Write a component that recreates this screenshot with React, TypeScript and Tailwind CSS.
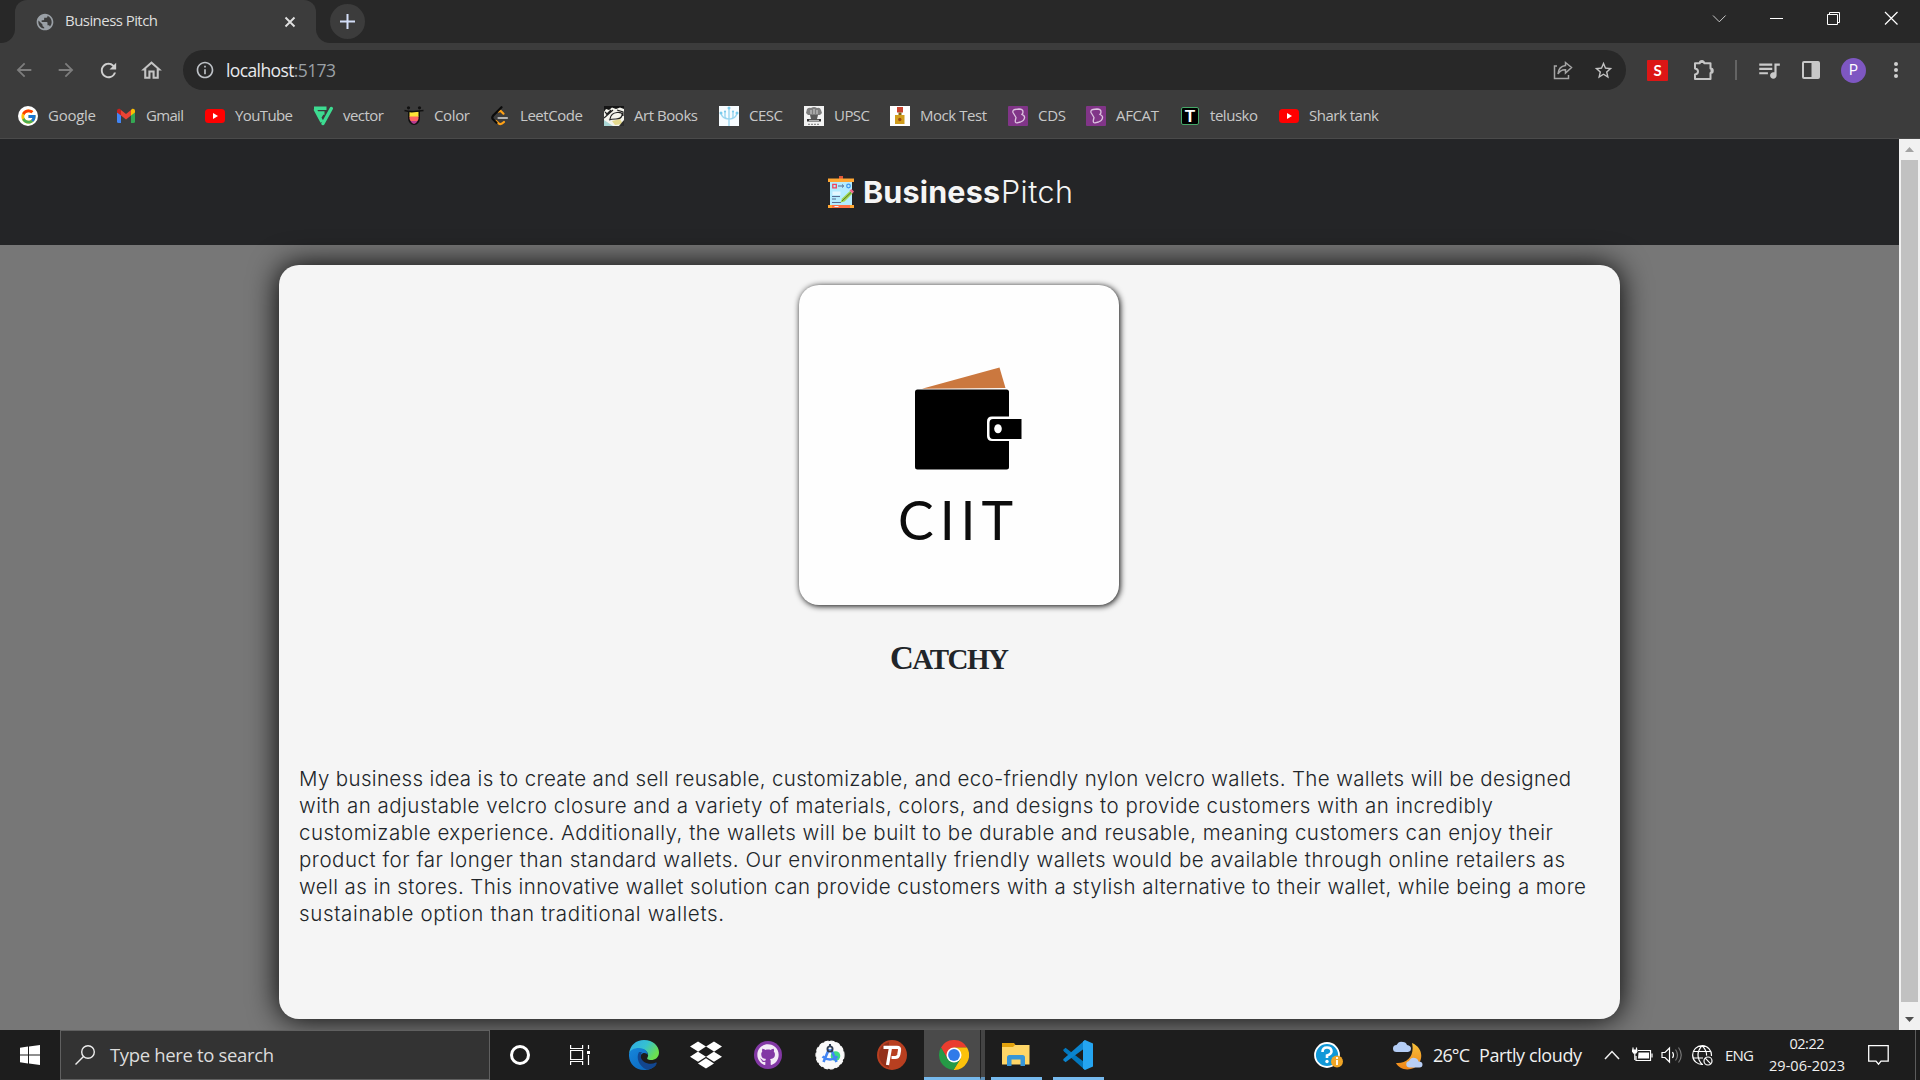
import React, { useLayoutEffect, useRef, useState } from "react";
import { FcGoogle } from "react-icons/fc";
import { FaDropbox, FaGithub } from "react-icons/fa";
import {
  MdArrowBack,
  MdArrowForward,
  MdRefresh,
  MdOutlineHome,
  MdInfoOutline,
  MdStarBorder,
  MdQueueMusic,
  MdPublic,
} from "react-icons/md";

/* Tracks a single line of text so that it spans the given width. */
function Fit({ width, className = "", children }: { width: number; className?: string; children: React.ReactNode }) {
  const ref = useRef<HTMLSpanElement>(null);
  const [spacing, setSpacing] = useState(0);
  useLayoutEffect(() => {
    const el = ref.current;
    if (!el) return;
    const n = (el.textContent || "").length;
    if (n > 1) setSpacing((width - el.getBoundingClientRect().width) / (n - 1));
  }, [width]);
  return (
    <span className={"block shrink-0 whitespace-nowrap " + className} style={{ width }}>
      <span ref={ref} className="inline-block" style={{ letterSpacing: spacing }}>
        {children}
      </span>
    </span>
  );
}

const YouTube = () => (
  <svg width="20" height="20" viewBox="0 0 20 20">
    <rect y="3" width="20" height="14" rx="3.5" fill="#f00" />
    <path d="M8 7v6l5-3z" fill="#fff" />
  </svg>
);

const Google = () => (
  <span className="flex size-5 items-center justify-center rounded-full bg-white">
    <FcGoogle size={17} />
  </span>
);

const Gmail = () => (
  <svg width="20" height="20" viewBox="0 0 20 20">
    <path d="M1 6v9.500q0 1.500 1.500 1.500H5V8.500z" fill="#4285f4" />
    <path d="M19 6v9.500q0 1.500-1.500 1.500H15V8.500z" fill="#34a853" />
    <path d="M1 6.500V5c0-2 2-2.700 3.300-1.700L5 4v5.500z" fill="#c5221f" />
    <path d="M19 6.500V5c0-2-2-2.700-3.300-1.700L15 4v5.500z" fill="#fbbc04" />
    <path d="M5 4l5 4 5-4v5.500l-5 4-5-4z" fill="#ea4335" />
  </svg>
);

const Vector = () => (
  <svg width="20" height="20" viewBox="0 0 20 20" fill="none" stroke="#3ddc91">
    <path d="M1 2.200h12.500M2 3l7 13M5 7h6.500M7 11l3-5" strokeWidth="3.400" />
    <path d="M18.300 2.500L10 17.500" strokeWidth="3.400" strokeLinecap="round" />
  </svg>
);

const ColorHunt = () => (
  <svg width="20" height="20" viewBox="0 0 20 20">
    <path d="M4 5h12v7a6 7 0 0 1-12 0z" fill="#111" />
    <path d="M5.500 5.500h9V11h-9z" fill="#ffe437" />
    <path d="M5.500 10.500h9V13l-1 2h-7l-1-2z" fill="#ff6464" />
    <path d="M6.500 15h7q-1.500 3-3.500 3t-3.500-3z" fill="#b83b8e" />
    <path d="M.5 4.500Q5 6 10 5.500t9.500-1" stroke="#111" strokeWidth="1.600" fill="none" />
    <circle cx="4.500" cy="1.800" r="1.600" fill="#111" />
    <circle cx="15.500" cy="1.800" r="1.600" fill="#111" />
  </svg>
);

const LeetCode = () => (
  <svg width="20" height="20" viewBox="0 0 20 20" fill="none" strokeLinecap="round" strokeWidth="2.200">
    <path d="M8.500 5.500l2-.8 3 3M6 15l3.500 3q2 .6 4.500-2" stroke="#ffa116" />
    <path d="M11.500 1.200L3 9.800q-1.500 2 0 3.500l3.500 3.500" stroke="#0b0b0b" />
    <path d="M8.500 12H17" stroke="#b3b3b3" />
  </svg>
);

const ArtBooks = () => (
  <svg width="20" height="20" viewBox="0 0 20 20">
    <path d="M0 0h20v20H0z" fill="#f5f5ee" />
    <path d="M0 0h20v3l-4-1.500L12 3 8 1.500 5 4 2 3 0 6z" fill="#151515" />
    <path d="M2 9l5-5M0 12l9-8M1 6l3 3M6 13Q7 7 13 6.500t5 3-6 3.500-7 1M13 4l6 2v4" stroke="#222" strokeWidth="1.200" fill="none" />
    <path d="M8 15l8-2 3 5-8 1z" fill="#e6da8e" />
    <path d="M0 14l9 6H0z" fill="#a9d6d5" />
    <path d="M15 20l5-6v6z" fill="#2c2c2c" />
  </svg>
);

const Cesc = () => (
  <svg width="20" height="20" viewBox="0 0 20 20" fill="none">
    <path d="M0 0h20v20H0z" fill="#f7fcff" />
    <path d="M10 2v18M2 7q1 6 8 6t8-6M6 6v5q1 2 4 2 4 0 4-2V6" stroke="#9ad6f0" strokeWidth="1.400" />
    <g fill="#7acbec">
      <circle cx="10" cy="2" r="1.500" />
      <circle cx="2" cy="7" r="1.500" />
      <circle cx="18" cy="7" r="1.500" />
      <circle cx="6" cy="5.500" r="1.100" />
      <circle cx="14" cy="5.500" r="1.100" />
    </g>
  </svg>
);

const Upsc = () => (
  <svg width="20" height="20" viewBox="0 0 20 20">
    <path d="M0 0h20v20H0z" fill="#f3f3f3" />
    <path d="M3 3q2-2 4-1 3-2 6 0 3-1 4 2l1 3-2 2H4L2 7z" fill="#7e7e7e" />
    <path d="M6 9h8l-1 4H7z" fill="#5a5a5a" />
    <path d="M3 13h14v2.500H3z" fill="#333" />
    <path d="M7 4v4M10 3v5M13 4v4M5 14.300h10" stroke="#d0d0d0" />
    <path d="M4 18.300h12" stroke="#777" strokeDasharray="2 1" />
  </svg>
);

const MockTest = () => (
  <svg width="20" height="20" viewBox="0 0 20 20">
    <path d="M0 0h20v20H0z" fill="#fff" />
    <path d="M7 1h6v5.500H7z" fill="#c8442f" />
    <path d="M8.500 6.500h3V9h-3z" fill="#7d6412" />
    <path d="M5 9h9.500v9H5z" fill="#d19d1d" />
    <circle cx="9.800" cy="13.500" r="1.700" fill="#9c4a12" />
  </svg>
);

const Byju = () => (
  <svg width="20" height="20" viewBox="0 0 20 20">
    <rect width="20" height="20" rx="1" fill="#813588" />
    <path
      d="M5 6.500Q4.300 4 7 3.500l4-.5q4 0 4 3 0 1.500-1.200 2.500Q17 9.500 16.500 12q-.5 3-4 4l-3.500.8Q7 17 7.300 14.500L8 11.500z"
      fill="none"
      stroke="#dcc3df"
      strokeWidth="1.300"
      strokeLinejoin="round"
    />
  </svg>
);

const Telusko = () => (
  <span className="flex h-[18px] w-[18px] items-center justify-center rounded-[2px] border border-[#46a868] bg-black font-['Liberation_Sans'] text-[17px] leading-none font-bold text-white">
    T
  </span>
);

const bookmarks = [
  { icon: <Google />, name: "Google", w: 48, slot: "w-[98px]" },
  { icon: <Gmail />, name: "Gmail", w: 38, slot: "w-[89px]" },
  { icon: <YouTube />, name: "YouTube", w: 58, slot: "w-[108px]" },
  { icon: <Vector />, name: "vector", w: 41, slot: "w-[91px]" },
  { icon: <ColorHunt />, name: "Color", w: 36, slot: "w-[86px]" },
  { icon: <LeetCode />, name: "LeetCode", w: 63, slot: "w-[114px]" },
  { icon: <ArtBooks />, name: "Art Books", w: 64, slot: "w-[115px]" },
  { icon: <Cesc />, name: "CESC", w: 34, slot: "w-[85px]" },
  { icon: <Upsc />, name: "UPSC", w: 36, slot: "w-[86px]" },
  { icon: <MockTest />, name: "Mock Test", w: 67, slot: "w-[118px]" },
  { icon: <Byju />, name: "CDS", w: 28, slot: "w-[78px]" },
  { icon: <Byju />, name: "AFCAT", w: 43, slot: "w-[94px]" },
  { icon: <Telusko />, name: "telusko", w: 48, slot: "w-[99px]" },
  { icon: <YouTube />, name: "Shark tank", w: 70, slot: "w-[110px]" },
];

function TabStrip() {
  return (
    <div className="flex h-[43px] bg-[#282828]">
      <div className="h-full w-[15px] bg-[#3c3c3c]">
        <div className="h-full w-full rounded-br-[14px] bg-[#282828]" />
      </div>
      <div className="flex h-full w-[301px] items-center rounded-t-[12px] bg-[#3c3c3c] pl-5">
        <MdPublic size={20} color="#9aa0a6" />
        <Fit width={93} className="ml-[10px] pb-[3px] text-[15px] text-[#dedede]">Business Pitch</Fit>
        <svg className="ml-[126px]" width="12" height="12" viewBox="0 0 12 12">
          <path d="M1.500 1.500l9 9M10.500 1.500l-9 9" stroke="#e0e0e0" strokeWidth="1.900" />
        </svg>
      </div>
      <div className="h-full w-[14px] bg-[#3c3c3c]">
        <div className="h-full w-full rounded-bl-[14px] bg-[#282828]" />
      </div>
      <div className="mt-[4px] flex size-[35px] items-center justify-center rounded-full bg-[#3c3c3c]">
        <svg width="15" height="15" viewBox="0 0 15 15">
          <path d="M7.500 0v15M0 7.500h15" stroke="#d3def8" strokeWidth="2" />
        </svg>
      </div>
      <svg className="mt-[11px] ml-auto" width="186" height="15" viewBox="0 0 186 15" fill="none" stroke="#fff" strokeWidth="1">
        <path d="M1 4.500l6.300 6.300 6.300-6.300" stroke="#ccc" />
        <path d="M58 7.500h13" />
        <path d="M115.500 3.500h10v10h-10zM117.500 3.500v-2h10v10h-2" />
        <path d="M173 1l12.500 12.500M185.500 1L173 13.500" strokeWidth="1.200" />
      </svg>
      <div className="w-[22px]" />
    </div>
  );
}

function Toolbar() {
  return (
    <div className="flex h-[54px] items-center">
      <MdArrowBack className="ml-[13px]" size={22} color="#7d7d7d" />
      <MdArrowForward className="ml-[20px]" size={22} color="#7d7d7d" />
      <MdRefresh className="ml-[20px]" size={23} color="#cfcfcf" />
      <MdOutlineHome className="ml-[19px]" size={25} color="#c4c4c4" />
      <div className="ml-[19px] flex h-10 w-[1443px] items-center rounded-full bg-[#282828]">
        <MdInfoOutline className="ml-[12px]" size={20} color="#bdc1c6" />
        <Fit width={110} className="ml-[11px] text-[17.500px] text-[#9aa0a6]">
          <span className="text-[#e8eaed]">localhost</span>:5173
        </Fit>
        <svg className="mr-[20px] ml-auto" width="20" height="20" viewBox="0 0 20 20" fill="none" stroke="#a5a5a5" strokeWidth="1.500">
          <path d="M4 6H1.500v12.500h14V15" />
          <path d="M12.500 2.500l6 5-6 5.500V9.800Q7.500 9.500 5 14q.5-7.500 7.500-8.500z" />
        </svg>
        <MdStarBorder className="mr-[12px]" size={21} color="#c2c2c2" />
      </div>
      <div className="ml-[21px] flex size-[21px] items-center justify-center rounded-[1px] bg-[#dc1616] font-[Lato] text-[15px] leading-none font-bold text-white">
        S
      </div>
      <svg className="ml-[25px]" width="22" height="22" viewBox="0 0 22 22">
        <path
          d="M2 4.200h4.800a2.200 2.200 0 0 1 4.400 0H17.500V9.500a2.200 2.200 0 0 1 0 4.500V20H2v-4.500c4-.5 4-5.500 0-6z"
          fill="none"
          stroke="#c6c6c6"
          strokeWidth="2"
          strokeLinejoin="round"
        />
        <path d="M7 4a2.200 2.200 0 0 1 4.400 0zM17.500 9.500a2.200 2.200 0 0 1 0 4.500z" fill="#c6c6c6" />
      </svg>
      <div className="ml-5 h-5 w-[2px] bg-[#646464]" />
      <MdQueueMusic className="ml-[19px]" size={26} color="#cacaca" />
      <svg className="ml-[20px]" width="18" height="18" viewBox="0 0 18 18">
        <rect x="1" y="1" width="16" height="16" rx="1" fill="none" stroke="#c8c8c8" strokeWidth="2" />
        <path d="M9.500 1H17v16H9.500z" fill="#c8c8c8" />
      </svg>
      <div className="ml-[21px] flex size-[25px] items-center justify-center rounded-full bg-[#7e57c2] font-[Roboto] text-[14px] leading-none text-white">
        P
      </div>
      <svg className="ml-[28px]" width="4" height="16" viewBox="0 0 4 16" fill="#d0d0d0">
        <circle cx="2" cy="2" r="2" />
        <circle cx="2" cy="8" r="2" />
        <circle cx="2" cy="14" r="2" />
      </svg>
    </div>
  );
}

function PitchBoard() {
  return (
    <svg width="26" height="32" viewBox="0 0 26 32">
      <path d="M11 0h4v3h-4z" fill="#e0563a" />
      <path d="M2 6h22v23H2z" fill="#b4ecff" />
      <path d="M0 2.500h26V6H0z" fill="#ffa733" />
      <path d="M0 29h26v3H0z" fill="#ff7044" />
      <path d="M0 29h4v3H0zM22 29h4v3h-4z" fill="#ffa733" />
      <path d="M6.500 30h4v1h-4z" fill="#e3f6ff" />
      <path d="M4.800 8.300h3.500v3.500H4.800z" fill="none" stroke="#f0455f" strokeWidth="1.300" />
      <path d="M10 10h5M14 8.500l1.800 1.500-1.800 1.500" fill="none" stroke="#51698f" strokeWidth="1" />
      <circle cx="20.500" cy="10" r="1.800" fill="none" stroke="#3c95ee" strokeWidth="1.200" />
      <path d="M4.500 15.500h8v3.500h-8z" fill="#e4f7ff" />
      <path d="M4 20.500h8M4 23h4M4 26.500h9" stroke="#576d92" strokeWidth="1.100" />
      <path d="M12.500 26.500l1.500-4 8-7.500 2.500 2.500-8 8z" fill="#9ed64b" />
      <path d="M14 25l9-8.500" stroke="#59702c" strokeWidth="1" />
      <path d="M21.500 14.500l2-1.500 2.500 2.500-1.500 2z" fill="#f0678c" />
    </svg>
  );
}

const pitch = [
  { w: 1272, t: "My business idea is to create and sell reusable, customizable, and eco-friendly nylon velcro wallets. The wallets will be designed" },
  { w: 1194, t: "with an adjustable velcro closure and a variety of materials, colors, and designs to provide customers with an incredibly" },
  { w: 1254, t: "customizable experience. Additionally, the wallets will be built to be durable and reusable, meaning customers can enjoy their" },
  { w: 1266, t: "product for far longer than standard wallets. Our environmentally friendly wallets would be available through online retailers as" },
  { w: 1287, t: "well as in stores. This innovative wallet solution can provide customers with a stylish alternative to their wallet, while being a more" },
  { w: 425, t: "sustainable option than traditional wallets." },
];

function Page() {
  return (
    <div className="flex h-[891px]">
      <div className="flex w-[1899px] flex-col overflow-hidden bg-[#777]">
        <header className="flex h-[106px] shrink-0 items-center bg-[#242527] pl-[828px] font-[Inter] text-[30.500px] leading-[40px] text-[#f5f5f5]">
          <PitchBoard />
          <Fit width={137} className="ml-[9px] font-bold">Business</Fit>
          <Fit width={72} className="ml-px font-light">Pitch</Fit>
        </header>
        <main className="mt-5 ml-[279px] flex h-[754px] w-[1341px] shrink-0 flex-col rounded-[20px] bg-[#f5f5f5] p-5 text-[#212529] shadow-[0_0_30px_#000]">
          <div className="ml-[500px] flex size-80 flex-col rounded-[20px] bg-[#fefefe] shadow-[1px_1px_6px_#000]">
            <svg className="mt-[81px] ml-[115px] shrink-0" width="108" height="104" viewBox="0 0 108 104">
              <path d="M8 22.800L85.500 1.500l6 20.500z" fill="#cb783f" />
              <rect x="1" y="23.500" width="94" height="80" rx="2.500" fill="#000" />
              <path d="M95.500 50.500H78q-5 0-5 5v14.500q0 5 5 5h17.500" fill="#fff" />
              <path d="M107.500 53H79q-3.500 0-3.500 4v12q0 4 3.500 4h28.500z" fill="#000" />
              <ellipse cx="84" cy="62.800" rx="3.800" ry="4.500" fill="#fff" />
            </svg>
            <Fit width={115} className="mt-[17px] ml-[99px] font-[Lato] text-[53.500px] leading-[64px] text-[#0c0c0c]">CIIT</Fit>
          </div>
          <h2 className="mt-[33px] ml-[591px] font-['Liberation_Serif'] text-[33px] leading-[40px] font-bold">
            <Fit width={119}>
              C<span className="text-[29px] uppercase">atchy</span>
            </Fit>
          </h2>
          <div className="mt-[86px] font-[Inter] text-[20.500px] leading-[27px] font-light">
            {pitch.map((l) => (
              <Fit key={l.w} width={l.w}>{l.t}</Fit>
            ))}
          </div>
        </main>
      </div>
      <div className="flex w-[21px] flex-col items-center bg-[#f1f1f1]">
        <svg className="my-[8px] shrink-0" width="9" height="5" viewBox="0 0 9 5"><path d="M0 5L4.500 0 9 5z" fill="#a3a3a3" /></svg>
        <div className="h-[842px] w-[17px] bg-[#c1c1c1]" />
        <svg className="mt-[15px] shrink-0" width="9" height="5" viewBox="0 0 9 5"><path d="M0 0h9L4.500 5z" fill="#505050" /></svg>
      </div>
    </div>
  );
}

const Edge = () => (
  <svg width="30" height="30" viewBox="0 0 30 30">
    <defs>
      <linearGradient id="edgeTop" x1="0" y1="0" x2="1" y2=".5">
        <stop offset="0" stopColor="#2fa8e8" />
        <stop offset=".55" stopColor="#35c1d1" />
        <stop offset="1" stopColor="#6ce04f" />
      </linearGradient>
      <linearGradient id="edgeLow" x1="0" y1="0" x2="1" y2="1">
        <stop offset="0" stopColor="#1687dc" />
        <stop offset="1" stopColor="#0a62b8" />
      </linearGradient>
    </defs>
    <path d="M0 14C1 5 7 0 15 0c9 0 15 6 15 12.500 0 5-4 7.500-8 7.500-3 0-4.500-1-3.500-2.500 2-3-.5-8.500-7-8.500C6 9 1 11 0 14z" fill="url(#edgeTop)" />
    <path d="M0 14c1-4 5-6 10-6 6 0 9 4 8.800 7-1-2-5-3-6.800 0-2.500 5 1 10 7 11 3 .5 6 0 8.500-2C25 28 20 30 15 30 6 30-.5 23 0 14z" fill="url(#edgeLow)" />
    <path d="M10 12c-3 5-1 14 8 17.800 4-.6 8-3 9.800-6.600.2-.7-.4-1-1-.6-6 3-14 0-15-5.600-.2-2 .3-3.600 1.200-5z" fill="#12468f" />
  </svg>
);

const AndroidStudio = () => (
  <svg width="30" height="30" viewBox="0 0 30 30" fill="none">
    <circle cx="15" cy="15" r="14" fill="#fafafa" stroke="#fafafa" strokeWidth="1.200" strokeDasharray="4 2" />
    <circle cx="20.500" cy="16" r="4.800" fill="#3ddc84" />
    <path d="M14 9L8.500 22M16 9l5.500 13M7.500 16.500q7.500 6 15 0" stroke="#4285f4" strokeWidth="2.600" />
    <circle cx="15" cy="9" r="2.600" stroke="#2f3c52" strokeWidth="1.800" />
    <path d="M15 4v3" stroke="#2f3c52" strokeWidth="2" />
  </svg>
);

const Psiphon = () => (
  <svg width="30" height="30" viewBox="0 0 30 30">
    <circle cx="15" cy="15" r="15" fill="#b83f20" />
    <path d="M2 15A13 13 0 0 1 12 2V28A13 13 0 0 1 2 15z" fill="#93301a" />
    <path d="M6.500 7.300h13.500q3 0 2.500 3.200l-.7 4q-.6 3-3.600 3h-3.700M13.500 7.500L10.500 25" fill="none" stroke="#fff" strokeWidth="3.200" />
  </svg>
);

const Chrome = () => (
  <svg width="30" height="30" viewBox="0 0 30 30">
    <path d="M2 7.500A15 15 0 0 1 28 7.500H15L8.500 18.700z" fill="#ea3d2f" />
    <path d="M28 7.500A15 15 0 0 1 14.500 30l7-11.300L15 7.500z" fill="#fcc20b" />
    <path d="M2 7.500A15 15 0 0 0 14.500 30l7-11.300H8.500z" fill="#259a46" />
    <circle cx="15" cy="15" r="7.500" fill="#fff" />
    <circle cx="15" cy="15" r="5.900" fill="#2f7be9" />
  </svg>
);

const Explorer = () => (
  <svg width="28" height="24" viewBox="0 0 28 24">
    <path d="M0 1h12l1.500 2H27v5H0z" fill="#e3a20c" />
    <path d="M0 5h11l2-2h14.500v19.500H0z" fill="#ffd667" />
    <path d="M5 24V15.500Q5 13 7.500 13h13q2.500 0 2.500 2.500V24h-4.500v-6.500h-9V24z" fill="#3796d8" />
  </svg>
);

const VsCode = () => (
  <svg width="30" height="30" viewBox="0 0 30 30">
    <path d="M0 10l2.500-2.300 19.500 15V30L1 11.500z" fill="#0277bd" />
    <path d="M0 20l2.500 2.300L22 8V0L1 18.500z" fill="#0a84cf" />
    <path d="M22 0l8 3.500v23L22 30l-2-1.500v-27z" fill="#25a5f1" />
  </svg>
);

function Taskbar() {
  return (
    <div className="flex h-[50px] items-center bg-[#1d1d1d] text-[#f0f0f0]">
      <div className="flex w-[60px] justify-center">
        <svg width="20" height="20" viewBox="0 0 20 20" fill="#fff">
          <path d="M0 2.800L8 1.600V9.500H0zM9 1.500L20 0v9.500H9zM0 10.500h8v7.900l-8-1.200zM9 10.500h11V20L9 18.500z" />
        </svg>
      </div>
      <div className="flex h-[50px] w-[430px] items-center border border-[#606060] bg-[#333]">
        <svg className="ml-[14px]" width="20" height="20" viewBox="0 0 20 20" fill="none" stroke="#eee" strokeWidth="1.400">
          <circle cx="13" cy="7" r="6.300" />
          <path d="M8.500 11.500L.5 19.500" />
        </svg>
        <Fit width={164} className="ml-[15px] text-[18.500px] text-[#dcdcdc]">Type here to search</Fit>
      </div>
      <div className="ml-[20px] size-5 rounded-full border-[3px] border-white" />
      <svg className="ml-[40px]" width="20" height="20" viewBox="0 0 20 20" fill="none" stroke="#fff" strokeWidth="1.200">
        <path d="M.6 0v3.500h12V0M.6 5.500h12v9H.6zM.6 20v-3.500h12V20M18.500 0v4M18.500 10v10" />
        <path d="M17 6h3v3h-3z" fill="#fff" stroke="none" />
      </svg>
      <div className="ml-[39px]"><Edge /></div>
      <FaDropbox className="ml-[31px]" size={32} color="#fff" />
      <div className="ml-[32px] flex size-[28px] items-center justify-center rounded-full bg-[#8338a5]">
        <FaGithub size={22} color="#f4eaf7" />
      </div>
      <div className="ml-[33px]"><AndroidStudio /></div>
      <div className="ml-[32px]"><Psiphon /></div>
      <div className="ml-[17px] flex h-full w-[56px] flex-col items-center justify-between border-b-[3px] border-[#76b9ed] bg-[#4a4a4a] pt-[10px] pl-[3px]">
        <Chrome />
      </div>
      <div className="h-full w-[5px] border-b-[3px] border-l border-b-[#5f93bd] border-l-[#222] bg-[#444]" />
      <div className="ml-[6px] flex h-full w-[51px] flex-col items-center border-b-[3px] border-[#76b9ed] pt-[12px] pr-[2px]">
        <Explorer />
      </div>
      <div className="ml-[11px] flex h-full w-[51px] flex-col items-center border-b-[3px] border-[#76b9ed] pt-[10px] pr-[2px]">
        <VsCode />
      </div>
      <svg className="ml-[210px]" width="29" height="28" viewBox="0 0 29 28">
        <circle cx="13" cy="14" r="12" fill="#1098d8" stroke="#fff" strokeWidth="1.800" />
        <path d="M8.500 11q0-4.500 4.500-4.500t4.500 4Q17.500 13 13 14.500V17" fill="none" stroke="#fff" strokeWidth="2.600" />
        <circle cx="13" cy="20.500" r="1.700" fill="#fff" />
        <circle cx="23" cy="20.500" r="6" fill="#f0a526" />
        <path d="M23 19v5M23 16v2" stroke="#fff" strokeWidth="1.800" />
      </svg>
      <svg className="ml-[50px]" width="30" height="29" viewBox="0 0 30 29">
        <defs>
          <linearGradient id="moon" x1="0" y1="0" x2="0" y2="1">
            <stop offset="0" stopColor="#f7c13a" />
            <stop offset="1" stopColor="#f08519" />
          </linearGradient>
        </defs>
        <path d="M19 2c12 5 12 19 2 25-7 3-15 1-18-5 11 1 19-7 16-20z" fill="url(#moon)" />
        <path d="M3.500 11a3.500 3.500 0 0 1 0-7Q6-.5 10 1q3 0 4 3 4 .5 4 3.500T15 11z" fill="#b4cdf5" />
        <path d="M16 26.500a3.300 3.300 0 0 1 0-6.500q2-4 6-3 3 .5 3.500 3.500 4 0 4 3t-3 3z" fill="#b9cff6" />
      </svg>
      <Fit width={37} className="ml-[10px] text-[18px]">26°C</Fit>
      <Fit width={103} className="ml-[9px] text-[18px]">Partly cloudy</Fit>
      <svg className="ml-[22px]" width="16" height="10" viewBox="0 0 16 10"><path d="M1 9l7-7.500L15 9" fill="none" stroke="#f0f0f0" strokeWidth="1.500" /></svg>
      <svg className="ml-[12px]" width="21" height="16" viewBox="0 0 21 16" fill="none" stroke="#fff">
        <path d="M6 3.500h12.500v10H4V9" strokeWidth="1.200" />
        <path d="M6.500 5.500h10.500v6H6z" fill="#fff" stroke="none" />
        <path d="M20 6.500v4M1 .5v2.500M4.500.5v2.500M2.800 7v6" strokeWidth="1.200" />
        <path d="M0 2.500h5.500v2q-1 2.500-2.700 2.500T0 4.500z" fill="#fff" stroke="none" />
      </svg>
      <svg className="ml-[8px]" width="22" height="18" viewBox="0 0 22 18" fill="none" stroke="#fff" strokeWidth="1.200">
        <path d="M1 6.500h3L8.500 2v14L4 11.500H1zM11.500 6q2 3 0 6" />
        <path d="M14.500 3.500q4 5.500 0 11M17.500 1.500q5.500 7.500 0 15" stroke="#777" />
      </svg>
      <svg className="ml-[9px]" width="21" height="21" viewBox="0 0 21 21" fill="none" stroke="#fff" strokeWidth="1.200">
        <path d="M11 19.400A9.400 9.400 0 1 1 19.400 11M10 19.400Q2 10 10 .6q5 5 4.500 10M1.500 6.500h17M1.500 13H11" />
        <circle cx="16" cy="16" r="4" />
        <path d="M13.200 13.200l5.600 5.600" />
      </svg>
      <Fit width={29} className="ml-[12px] text-[15px]">ENG</Fit>
      <div className="ml-[15px] flex w-[76px] flex-col items-center text-[14.500px] leading-[22px]">
        <Fit width={35}>02:22</Fit>
        <Fit width={76}>29-06-2023</Fit>
      </div>
      <svg className="ml-[23px]" width="21" height="21" viewBox="0 0 21 21" fill="none" stroke="#fff" strokeWidth="1.300">
        <path d="M.7.700h19.500v15.500H13l-2.500 3-2.500-3H.7z" />
      </svg>
      <div className="ml-auto h-full w-[5px] border-l border-[#5c5c5c]" />
    </div>
  );
}

export default function App() {
  return (
    <div className="h-[1080px] w-[1920px] overflow-hidden bg-[#3c3c3c] font-['Open_Sans',sans-serif]">
      <TabStrip />
      <Toolbar />
      <div className="flex h-[42px] items-center border-b border-[#4a4a4a] pb-[3px] pl-[18px] text-[15px] text-[#c8c8c8]">
        {bookmarks.map((b) => (
          <div key={b.name} className={"flex shrink-0 items-center gap-[10px] " + b.slot}>
            <span className="flex w-5 shrink-0 justify-center">{b.icon}</span>
            <Fit width={b.w} className="pb-[2px]">{b.name}</Fit>
          </div>
        ))}
      </div>
      <Page />
      <Taskbar />
    </div>
  );
}
